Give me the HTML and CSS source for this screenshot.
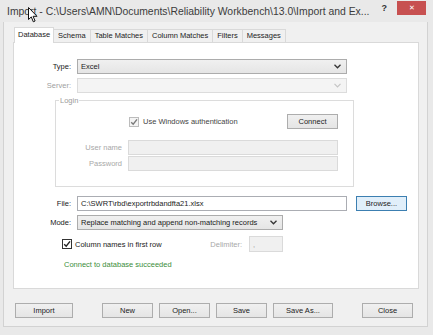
FILE: index.html
```html
<!DOCTYPE html>
<html lang="en">
<head>
  <meta charset="UTF-8" />
  <title>Import</title>
  <link rel="stylesheet" href="styles.css">
</head>
<body>

  <div class="window">
    <div class="titlebar">
      <span class="title">Import - C:\Users\AMN\Documents\Reliability Workbench\13.0\Import and Ex...</span>
      <span class="help">?</span>
      <span class="close">&#x2715;</span>
    </div>

    <div class="client">
      <div class="tabs">
        <span class="tab active">Database</span>
        <span class="tab">Schema</span>
        <span class="tab">Table Matches</span>
        <span class="tab">Column Matches</span>
        <span class="tab">Filters</span>
        <span class="tab">Messages</span>
      </div>

      <div class="panel">
        <div class="row">
          <span class="lbl">Type:</span>
          <div class="select select-type">
            <span>Excel</span>
            <svg class="chev" width="7" height="5" viewBox="0 0 7 5"><path d="M0.5 0.8 L3.5 3.8 L6.5 0.8" fill="none" stroke="#333" stroke-width="1.3"/></svg>
          </div>
        </div>

        <div class="row row-gap">
          <span class="lbl off">Server:</span>
          <div class="select select-type select-off">
            <span></span>
            <svg class="chev" width="7" height="5" viewBox="0 0 7 5"><path d="M0.5 0.8 L3.5 3.8 L6.5 0.8" fill="none" stroke="#c4c4c4" stroke-width="1.2"/></svg>
          </div>
        </div>

        <fieldset class="login">
          <legend>Login</legend>
          <div class="auth-row">
            <span class="check check-off">
              <svg width="8" height="8" viewBox="0 0 8 8"><path d="M1.2 4.2 L3.2 6.2 L7 1.4" fill="none" stroke="#7a7a7a" stroke-width="1.4"/></svg>
            </span>
            <span class="auth-text">Use Windows authentication</span>
            <span class="btn btn-connect">Connect</span>
          </div>
          <div class="cred-row cred-first">
            <span class="cred-lbl">User name</span>
            <div class="input input-off"></div>
          </div>
          <div class="cred-row">
            <span class="cred-lbl">Password</span>
            <div class="input input-off"></div>
          </div>
        </fieldset>

        <div class="row row-file">
          <span class="lbl">File:</span>
          <div class="input input-file">C:\SWRT\rbd\exportrbdandfta21.xlsx</div>
          <span class="btn btn-browse">Browse...</span>
        </div>

        <div class="row row-gap">
          <span class="lbl">Mode:</span>
          <div class="select select-mode">
            <span>Replace matching and append non-matching records</span>
            <svg class="chev" width="7" height="5" viewBox="0 0 7 5"><path d="M0.5 0.8 L3.5 3.8 L6.5 0.8" fill="none" stroke="#333" stroke-width="1.3"/></svg>
          </div>
        </div>

        <div class="opts-row">
          <span class="check">
            <svg width="8" height="8" viewBox="0 0 8 8"><path d="M1.2 4.2 L3.2 6.2 L7 1.4" fill="none" stroke="#222" stroke-width="1.4"/></svg>
          </span>
          <span class="opts-text">Column names in first row</span>
          <span class="delim-lbl">Delimiter:</span>
          <div class="input input-delim">,</div>
        </div>

        <p class="status">Connect to database succeeded</p>
      </div>

      <div class="actions">
        <span class="btn btn-import">Import</span>
        <span class="btn btn-new">New</span>
        <span class="btn">Open...</span>
        <span class="btn">Save</span>
        <span class="btn btn-saveas">Save As...</span>
        <span class="btn btn-close">Close</span>
      </div>
    </div>
  </div>

  <svg class="cursor" width="11" height="16" viewBox="0 0 11 16">
    <path d="M0.5 0.5 L0.5 12.5 L3.3 9.9 L5.3 14.8 L7.1 14 L5.1 9.3 L9 9.3 Z" fill="#fff" stroke="#111" stroke-width="1" stroke-linejoin="round"/>
  </svg>

</body>
</html>
```

FILE: styles.css
```css
body {
  font-family: 'Liberation Sans', Arial, sans-serif;
  font-size: 7.5px;
  margin: 0;
  padding: 0;
  background: #e9e9e9;
  color: #1a1a1a;
  width: 433px;
  height: 335px;
  overflow: hidden;
  position: relative;
}

.window {
  width: 433px;
  height: 335px;
}

/* Title bar */
.titlebar {
  height: 22px;
  display: flex;
  align-items: center;
  padding-left: 7px;
}

.title {
  font-size: 10.4px;
  color: #3c3c3c;
  white-space: nowrap;
}

.help {
  margin-left: auto;
  font-size: 9px;
  font-weight: bold;
  color: #333;
  margin-top: -6px;
}

.close {
  width: 29px;
  height: 14px;
  margin: -7px 7px 0 10px;
  background: #c75050;
  color: #fff;
  font-size: 7px;
  display: flex;
  align-items: center;
  justify-content: center;
}

/* Client area */
.client {
  margin-left: 3px;
  width: 414px;
  height: 299px;
  background: #f0f0f0;
  border: 1px solid #d2d2d2;
  border-top: none;
  padding: 5px 0 0 9px;
}

.tabs {
  display: flex;
  align-items: flex-end;
  height: 15px;
  padding-left: 1px;
}

.tab {
  height: 12px;
  line-height: 12px;
  padding: 0 4px;
  border: 1px solid #d9d9d9;
  border-bottom: none;
  margin-right: -1px;
  background: #f0f0f0;
  color: #222;
}

.tab.active {
  height: 15px;
  line-height: 13px;
  background: #fff;
  position: relative;
  z-index: 1;
  margin-bottom: -1px;
  padding: 0 3px;
}

.panel {
  width: 404px;
  height: 245px;
  box-sizing: content-box;
  background: #fff;
  border: 1px solid #d9d9d9;
  padding-top: 0;
}

/* Form rows */
.row {
  display: flex;
  align-items: center;
  height: 15px;
  margin-top: 16px;
}

.row-gap {
  margin-top: 4px;
}

.row-file {
  margin-top: 9px;
}

.lbl {
  width: 57px;
  margin-right: 6px;
  text-align: right;
}

.off {
  color: #a0a0a0;
}

.select {
  height: 15px;
  box-sizing: border-box;
  border: 1px solid #acacac;
  background: linear-gradient(#f0f0f0, #e5e5e5);
  display: flex;
  align-items: center;
  padding: 0 5px 0 3px;
}

.select span {
  flex: 1;
  white-space: nowrap;
  overflow: hidden;
}

.select-type {
  width: 270px;
}

.select-mode {
  width: 206px;
}

.select-off {
  background: #f4f4f4;
  border-color: #dcdcdc;
}

.input {
  height: 15px;
  box-sizing: border-box;
  border: 1px solid #abadb3;
  background: #fff;
  display: flex;
  align-items: center;
  padding: 0 3px;
  white-space: nowrap;
}

.input-file {
  width: 270px;
}

.input-off {
  width: 210px;
  background: #f0f0f0;
  border-color: #dadada;
}

.input-delim {
  width: 34px;
  height: 16px;
  background: #f0f0f0;
  border-color: #dadada;
  color: #9a9a9a;
}

.btn {
  height: 15px;
  box-sizing: border-box;
  border: 1px solid #adadad;
  background: linear-gradient(#f0f0f0, #e5e5e5);
  display: flex;
  align-items: center;
  justify-content: center;
  width: 51px;
  color: #222;
}

.btn-browse {
  margin-left: 9px;
  border-color: #3c7fb1;
  background: #e1effa;
}

/* Login group */
.login {
  margin: 3px 0 0 41px;
  padding: 9px 15px 15px 0;
  width: 299px;
  box-sizing: border-box;
  border: 1px solid #dcdcdc;
  min-inline-size: 0;
}

.login legend {
  color: #9a9a9a;
  padding: 0 1px;
  margin-left: 3px;
}

.auth-row {
  display: flex;
  align-items: center;
  height: 15px;
  padding-left: 73px;
}

.auth-text {
  margin-left: 4px;
  color: #444;
}

.btn-connect {
  margin-left: auto;
}

.cred-row {
  display: flex;
  align-items: center;
  height: 15px;
  margin-top: 1px;
  margin-left: 7px;
}

.cred-first {
  margin-top: 11px;
}

.cred-lbl {
  width: 59px;
  margin-right: 6px;
  text-align: right;
  color: #a8a8a8;
}

/* Checkbox */
.check {
  width: 10px;
  height: 10px;
  box-sizing: border-box;
  border: 1px solid #333;
  background: #fff;
  display: flex;
  align-items: center;
  justify-content: center;
}

.check-off {
  border-color: #bcbcbc;
  background: #f4f4f4;
}

.opts-row {
  display: flex;
  align-items: center;
  width: 221px;
  height: 16px;
  margin-top: 6px;
  padding-left: 48px;
}

.opts-text {
  margin-left: 3px;
}

.delim-lbl {
  margin-left: auto;
  margin-right: 7px;
  color: #a8a8a8;
}

.status {
  margin: 8px 0 0 50px;
  color: #3b8e3b;
}

/* Bottom buttons */
.actions {
  display: flex;
  gap: 6px;
  margin-top: 14px;
  padding-left: 2px;
  width: 398px;
}

.btn-import {
  width: 58px;
}

.btn-new {
  margin-left: 23px;
}

.btn-saveas {
  width: 60px;
}

.btn-close {
  margin-left: auto;
}

.cursor {
  position: absolute;
  left: 28px;
  top: 7px;
}
```
